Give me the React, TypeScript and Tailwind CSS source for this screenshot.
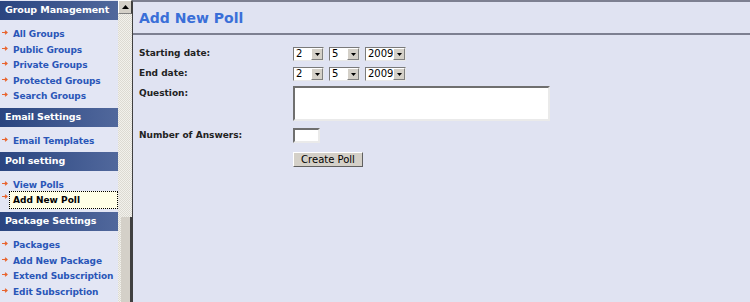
import React from 'react';

const sections = [
  { title: 'Group Management', items: ['All Groups', 'Public Groups', 'Private Groups', 'Protected Groups', 'Search Groups'] },
  { title: 'Email Settings', items: ['Email Templates'] },
  { title: 'Poll setting', items: ['View Polls', 'Add New Poll'] },
  { title: 'Package Settings', items: ['Packages', 'Add New Package', 'Extend Subscription', 'Edit Subscription'] },
];

const Bullet = () => (
  <svg width="6" height="5" viewBox="0 0 6 5" className="absolute left-[2px] top-[3px]">
    <path d="M0 2.5H4.5M3 0.8L5 2.5L3 4.2" stroke="#e8642e" strokeWidth="1.2" fill="none" />
  </svg>
);

const FakeSelect = ({ value, width }: { value: string; width: string }) => (
  <div className={`flex h-[14px] ${width} items-stretch border border-t-[#7a7a7a] border-l-[#7a7a7a] border-b-[#e8e8e8] border-r-[#e8e8e8] bg-white`}>
    <span className="flex-1 pl-[2px] text-[10px] font-normal leading-[12px] text-black">{value}</span>
    <span className="flex w-[12px] items-center justify-center border border-t-white border-l-white border-b-[#808080] border-r-[#808080] bg-[#d4d0c8]">
      <svg width="5" height="3" viewBox="0 0 5 3">
        <path d="M0 0H5L2.5 3Z" fill="#000" />
      </svg>
    </span>
  </div>
);

const DateRow = () => (
  <div className="flex gap-[5px]">
    <FakeSelect value="2" width="w-[31px]" />
    <FakeSelect value="5" width="w-[31px]" />
    <FakeSelect value="2009" width="w-[41px]" />
  </div>
);

export default function App() {
  return (
    <div className="flex h-[302px] w-[750px] overflow-hidden bg-[#e0e3f2]" style={{ fontFamily: '"DejaVu Sans", Verdana, sans-serif' }}>
      {/* Sidebar */}
      <div className="w-[118px] shrink-0 bg-[#e3e6f4] pt-[1px]">
        {sections.map((s) => (
          <div key={s.title}>
            <div className="flex h-[19px] items-center whitespace-nowrap bg-gradient-to-r from-[#2a4580] to-[#51689c] pl-[5px] text-[9.5px] font-bold tracking-[-0.1px] text-white">
              {s.title}
            </div>
            <div className="pt-[7px] pb-[3px]">
              {s.items.map((it) =>
                it === 'Add New Poll' ? (
                  <div key={it} className="relative -mt-[2.5px] h-[18px]">
                    <Bullet />
                    <div className="ml-[9px] h-[18px] whitespace-nowrap border border-dotted border-black bg-[#ffffe6] pl-[3px] text-[9px] font-bold leading-[16px] text-black">
                      {it}
                    </div>
                  </div>
                ) : (
                  <div key={it} className="relative h-[15.5px] whitespace-nowrap pl-[13px] text-[9px] font-bold leading-[15px] tracking-[-0.1px] text-[#2a56b8]">
                    <Bullet />
                    {it}
                  </div>
                )
              )}
            </div>
          </div>
        ))}
      </div>

      {/* Scrollbar */}
      <div className="flex w-[14px] shrink-0 flex-col bg-[repeating-conic-gradient(#f2f1ec_0%_25%,#dcdad2_0%_50%)] bg-[length:2px_2px]">
        <div className="flex h-[14px] items-center justify-center border border-t-white border-l-white border-b-[#808080] border-r-[#404040] bg-[#d4d0c8]">
          <svg width="7" height="4" viewBox="0 0 7 4">
            <path d="M0 4H7L3.5 0Z" fill="#000" />
          </svg>
        </div>
        <div className="flex-1" />
        <div className="ml-[3px] h-[85px] border-r-2 border-[#404040] bg-[#d4d0c8]" />
      </div>

      {/* Main */}
      <div className="flex-1 border-t-2 border-l border-[#7d8091] border-l-[#404040]">
        <div className="pl-[6px] pt-[6px] pb-[5px] text-[14px] font-bold leading-[20px] text-[#3a6fd8]">Add New Poll</div>
        <div className="h-[2px] bg-[#7d8091]" />
        <div className="pl-[6px] pt-[12px] text-[9px] font-bold text-[#222]">
          <div className="flex items-center">
            <span className="w-[154px]">Starting date:</span>
            <DateRow />
          </div>
          <div className="mt-[6px] flex items-center">
            <span className="w-[154px]">End date:</span>
            <DateRow />
          </div>
          <div className="mt-[5px] flex items-start">
            <span className="w-[154px] pt-[1px]">Question:</span>
            <div className="h-[35px] w-[257px] border-2 border-t-[#6f6f6f] border-l-[#6f6f6f] border-b-[#eaeaea] border-r-[#eaeaea] bg-white" />
          </div>
          <div className="mt-[7px] flex items-center">
            <span className="w-[154px]">Number of Answers:</span>
            <div className="h-[15px] w-[27px] border-2 border-t-[#6f6f6f] border-l-[#6f6f6f] border-b-[#eaeaea] border-r-[#eaeaea] bg-white" />
          </div>
          <div className="mt-[9px] flex">
            <span className="w-[154px]" />
            <button className="h-[15px] w-[70px] border border-t-white border-l-white border-b-[#606060] border-r-[#606060] bg-[#d4d0c8] text-[10px] font-normal leading-[13px] text-black">
              Create Poll
            </button>
          </div>
        </div>
      </div>
    </div>
  );
}
